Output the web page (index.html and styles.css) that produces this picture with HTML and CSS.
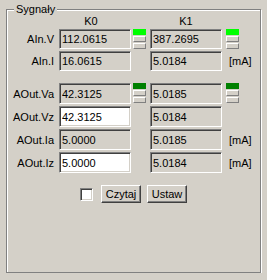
FILE: index.html
```html
<!DOCTYPE html>
<html lang="pl">
<head>
    <meta charset="UTF-8">
    <title>Sygnały</title>
    <link rel="stylesheet" href="styles.css">
</head>
<body>
    <fieldset class="group">
        <legend>Sygnały</legend>

        <div class="grid">
            <div></div>
            <div class="head head-k0">K0</div>
            <div></div>
            <div class="head">K1</div>
            <div></div>

            <label class="name">AIn.V</label>
            <input class="field" type="text" value="112.0615" readonly>
            <div class="led on"><span></span><span></span><span></span></div>
            <input class="field" type="text" value="387.2695" readonly>
            <div class="led on last"><span></span><span></span><span></span></div>

            <label class="name">AIn.I</label>
            <input class="field" type="text" value="16.0615" readonly>
            <div></div>
            <input class="field" type="text" value="5.0184" readonly>
            <span class="unit">[mA]</span>

            <div class="spacer"></div>

            <label class="name">AOut.Va</label>
            <input class="field" type="text" value="42.3125" readonly>
            <div class="led dark"><span></span><span></span><span></span></div>
            <input class="field" type="text" value="5.0185" readonly>
            <div class="led dark last"><span></span><span></span><span></span></div>

            <label class="name">AOut.Vz</label>
            <input class="field edit" type="text" value="42.3125">
            <div></div>
            <input class="field" type="text" value="5.0184" readonly>
            <div></div>

            <label class="name">AOut.Ia</label>
            <input class="field" type="text" value="5.0000" readonly>
            <div></div>
            <input class="field" type="text" value="5.0185" readonly>
            <span class="unit">[mA]</span>

            <label class="name">AOut.Iz</label>
            <input class="field edit" type="text" value="5.0000">
            <div></div>
            <input class="field" type="text" value="5.0184" readonly>
            <span class="unit">[mA]</span>
        </div>

        <div class="actions">
            <input class="check" type="checkbox">
            <button class="btn">Czytaj</button>
            <button class="btn">Ustaw</button>
        </div>
    </fieldset>
</body>
</html>
```

FILE: styles.css
```css
:root {
    --face: #d4d0c8;
    --shadow: #808080;
    --dark: #404040;
    --light: #fff;
}

body {
    margin: 0;
    padding: 3px 0 0 6px;
    background: var(--face);
    color: #000;
    font: 11px "Liberation Sans", Arial, sans-serif;
}

.group {
    box-sizing: border-box;
    width: 255px;
    height: 270px;
    margin: 0;
    padding: 0;
    border: 1px solid var(--shadow);
    box-shadow: inset 1px 1px 0 var(--light), 1px 1px 0 var(--light);
}

.group legend {
    margin-left: 7px;
    padding: 0 2px;
    line-height: 13px;
    background: var(--face);
}

.grid {
    display: grid;
    grid-template-columns: 52px 72px 19px 72px 1fr;
    grid-template-rows: 12px 20px 20px 8px 21px 21px 21px 21px;
    row-gap: 2px;
    margin-top: -1px;
}

.head {
    line-height: 12px;
    text-align: center;
}

.head-k0 {
    padding-right: 8px;
}

.name {
    align-self: center;
    text-align: right;
    padding-right: 5px;
}

.spacer {
    grid-column: 1 / -1;
}

.field {
    box-sizing: border-box;
    width: 72px;
    height: 100%;
    margin: 0;
    padding: 0 0 0 2px;
    font: inherit;
    color: #000;
    background: var(--face);
    border: 1px solid;
    border-color: var(--shadow) var(--light) var(--light) var(--shadow);
    box-shadow: inset 1px 1px 0 var(--dark), inset -1px -1px 0 var(--face);
    outline: none;
}

.field.edit {
    background: #fff;
}

.unit {
    align-self: center;
    padding-left: 7px;
}

/* three stacked indicator cells, first one lit */
.led {
    display: flex;
    flex-direction: column;
    gap: 1px;
    width: 13px;
    margin-left: 2px;
    align-self: start;
}

.led.last {
    margin-left: 4px;
}

.led span {
    box-sizing: border-box;
    height: 6px;
    border: 1px solid;
    border-color: var(--light) var(--shadow) var(--shadow) var(--light);
}

.led.on span:first-child {
    background: #00ff00;
    border-color: #00ff00;
}

.led.dark span:first-child {
    background: #008000;
    border-color: #008000;
}

.actions {
    display: flex;
    justify-content: center;
    align-items: center;
    margin-top: 12px;
}

.check {
    appearance: none;
    box-sizing: border-box;
    width: 13px;
    height: 13px;
    margin: 0 8px 0 0;
    background: #fff;
    border: 1px solid;
    border-color: var(--shadow) var(--light) var(--light) var(--shadow);
    box-shadow: inset 1px 1px 0 var(--dark), inset -1px -1px 0 var(--face);
}

.btn {
    box-sizing: border-box;
    width: 40px;
    height: 18px;
    margin: 0;
    padding: 0;
    font: inherit;
    color: #000;
    background: var(--face);
    border: 1px solid;
    border-color: var(--light) var(--dark) var(--dark) var(--light);
    box-shadow: inset -1px -1px 0 var(--shadow);
}

.btn + .btn {
    margin-left: 6px;
}
```
